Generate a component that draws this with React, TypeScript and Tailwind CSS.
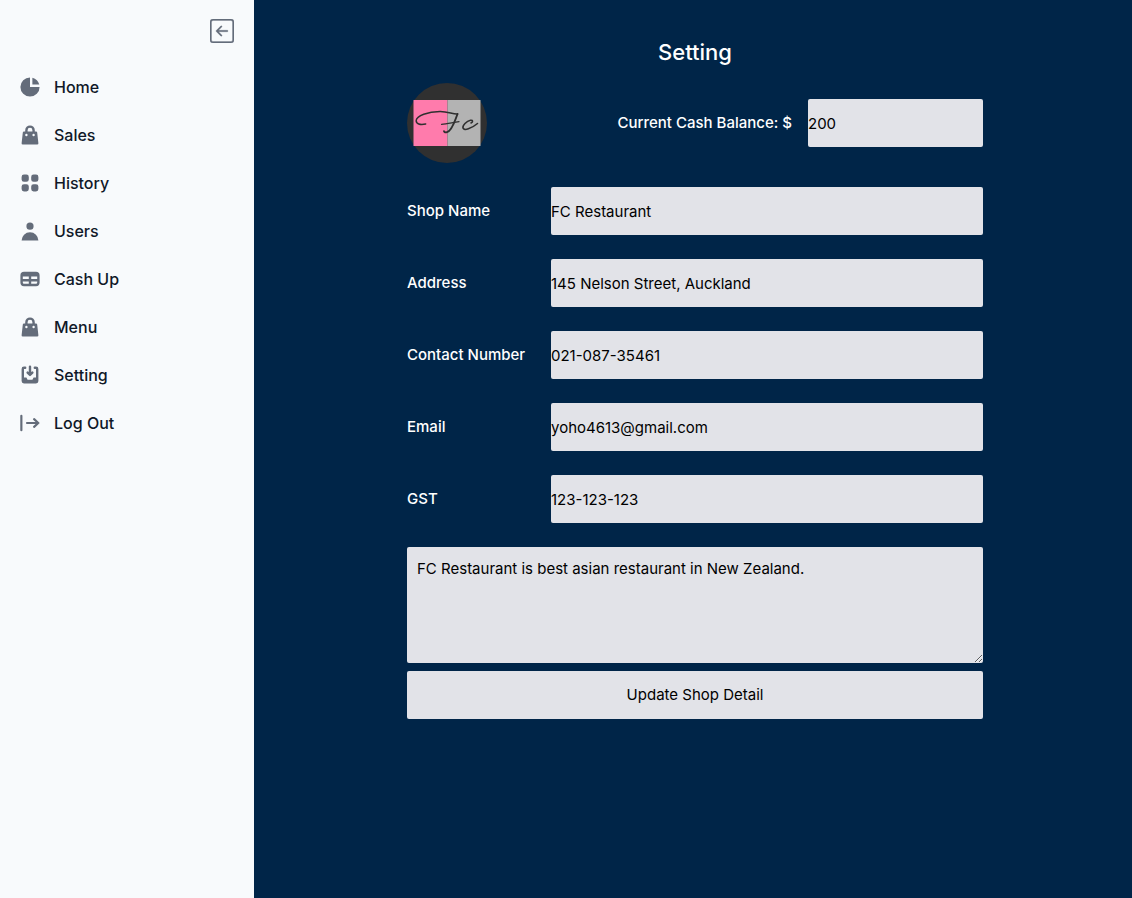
import { useState, type ReactNode } from "react";
import { BsArrowLeftSquare } from "react-icons/bs";

type NavItem = { label: string; icon: ReactNode };

const bag = (
  <path
    fillRule="evenodd"
    clipRule="evenodd"
    d="M10 2a4 4 0 00-4 4v1H5a1 1 0 00-.994.89l-1 9A1 1 0 004 18h12a1 1 0 00.994-1.11l-1-9A1 1 0 0015 7h-1V6a4 4 0 00-4-4zm2 5V6a2 2 0 10-4 0v1h4zm-6 3a1 1 0 112 0 1 1 0 01-2 0zm7-1a1 1 0 100 2 1 1 0 000-2z"
  />
);

const navItems: NavItem[] = [
  {
    label: "Home",
    icon: (
      <>
        <path d="M2 10a8 8 0 018-8v8h8a8 8 0 11-16 0z" />
        <path d="M12 2.252A8.014 8.014 0 0117.748 8H12V2.252z" />
      </>
    ),
  },
  { label: "Sales", icon: bag },
  {
    label: "History",
    icon: (
      <path d="M5 3a2 2 0 00-2 2v2a2 2 0 002 2h2a2 2 0 002-2V5a2 2 0 00-2-2H5zM5 11a2 2 0 00-2 2v2a2 2 0 002 2h2a2 2 0 002-2v-2a2 2 0 00-2-2H5zM11 5a2 2 0 012-2h2a2 2 0 012 2v2a2 2 0 01-2 2h-2a2 2 0 01-2-2V5zM11 13a2 2 0 012-2h2a2 2 0 012 2v2a2 2 0 01-2 2h-2a2 2 0 01-2-2v-2z" />
    ),
  },
  {
    label: "Users",
    icon: (
      <path fillRule="evenodd" clipRule="evenodd" d="M10 9a3 3 0 100-6 3 3 0 000 6zm-7 9a7 7 0 1114 0H3z" />
    ),
  },
  {
    label: "Cash Up",
    icon: (
      <path
        fillRule="evenodd"
        clipRule="evenodd"
        d="M5 4a3 3 0 00-3 3v6a3 3 0 003 3h10a3 3 0 003-3V7a3 3 0 00-3-3H5zm-1 9v-1h5v2H5a1 1 0 01-1-1zm7 1h4a1 1 0 001-1v-1h-5v2zm0-4h5V8h-5v2zM9 8H4v2h5V8z"
      />
    ),
  },
  { label: "Menu", icon: bag },
  {
    label: "Setting",
    icon: (
      <>
        <path d="M8.707 7.293a1 1 0 00-1.414 1.414l2 2a1 1 0 001.414 0l2-2a1 1 0 00-1.414-1.414L11 7.586V3a1 1 0 10-2 0v4.586l-.293-.293z" />
        <path d="M3 5a2 2 0 012-2h1a1 1 0 010 2H5v7h2l1 2h4l1-2h2V5h-1a1 1 0 110-2h1a2 2 0 012 2v10a2 2 0 01-2 2H5a2 2 0 01-2-2V5z" />
      </>
    ),
  },
  {
    label: "Log Out",
    icon: (
      <path
        d="M2.800 4v12M7.500 10h9.500M13.400 6.800L16.900 10l-3.500 3.200"
        fill="none"
        stroke="currentColor"
        strokeWidth="1.800"
        strokeLinecap="round"
        strokeLinejoin="round"
      />
    ),
  },
];

const fields = [
  { id: "shop-name", label: "Shop Name", type: "text", value: "FC Restaurant" },
  { id: "address", label: "Address", type: "text", value: "145 Nelson Street, Auckland" },
  { id: "contact", label: "Contact Number", type: "tel", value: "021-087-35461" },
  { id: "email", label: "Email", type: "email", value: "yoho4613@gmail.com" },
  { id: "gst", label: "GST", type: "text", value: "123-123-123" },
];

function Sidebar() {
  return (
    <aside className="w-[254px] shrink-0 bg-[#f8fafc] px-2">
      <div className="flex justify-end px-3 pt-[19px]">
        <button type="button" aria-label="Collapse sidebar" className="text-[#646c7a]">
          <BsArrowLeftSquare className="size-6" strokeWidth="0.2" />
        </button>
      </div>
      <nav className="pt-6">
        <ul className="space-y-2">
          {navItems.map((item) => (
            <li key={item.label}>
              <a href="#" className="flex items-center gap-3 rounded-lg px-[10px] py-2 font-medium text-gray-900">
                <svg viewBox="0 0 20 20" fill="currentColor" className="size-6 text-[#646c7a]" aria-hidden="true">
                  {item.icon}
                </svg>
                {item.label}
              </a>
            </li>
          ))}
        </ul>
      </nav>
    </aside>
  );
}

function ShopLogo() {
  return (
    <svg viewBox="0 0 80 80" className="size-20" role="img" aria-label="Shop logo">
      <circle cx="40" cy="40" r="40" fill="#303030" />
      <rect x="6.500" y="17" width="34" height="46" fill="#ff7bac" />
      <rect x="40.500" y="17" width="33" height="46" fill="#b3b3b3" />
      <g fill="none" stroke="#303030" strokeLinecap="round" strokeLinejoin="round">
        <path
          strokeWidth="1.500"
          d="M18.700 41C13 42.300 9 40.800 9.200 37.500C9.600 32.500 21 28.700 33 28.500C41 28.400 46 31.500 50.500 31"
        />
        <path strokeWidth="1.900" d="M50.500 31C48 37 45.500 47.500 40 49.200C38.500 49.700 37.300 49.200 37 48.200" />
        <path strokeWidth="1.200" d="M34.500 41.300C40 40.800 46 39.500 52 38.700" />
        <path
          strokeWidth="1.600"
          d="M64 40C66.300 38.800 66 37 63.500 37.300C59.500 38 55.300 42.500 56 45C57 48.300 64.500 45.500 70.500 40.500"
        />
      </g>
    </svg>
  );
}

const control = "h-12 min-w-0 rounded-xs bg-[#e2e3e8] text-black";

export default function App() {
  const [values, setValues] = useState<Record<string, string>>(
    Object.fromEntries(fields.map((f) => [f.id, f.value])),
  );

  return (
    <div className="flex min-h-screen font-[Inter,sans-serif] text-base">
      <Sidebar />
      <main className="flex-1 bg-[#002548] pr-4 pl-5 text-white">
        <form className="mx-auto max-w-xl pt-9 text-[15px] leading-6" onSubmit={(e) => e.preventDefault()}>
          <h1 className="text-center text-[22px] leading-8 font-medium">Setting</h1>
          <div className="mt-[15px] flex items-center justify-between">
            <ShopLogo />
            <div className="flex items-center gap-4">
              <label htmlFor="balance" className="font-medium">
                Current Cash Balance: $
              </label>
              <input id="balance" defaultValue="200" className={`${control} w-[175px]`} />
            </div>
          </div>
          <div className="mt-6 space-y-6">
            {fields.map((f) => (
              <div key={f.id} className="grid grid-cols-4 items-center">
                <label htmlFor={f.id} className="font-medium">
                  {f.label}
                </label>
                <input
                  id={f.id}
                  type={f.type}
                  value={values[f.id]}
                  onChange={(e) => setValues({ ...values, [f.id]: e.target.value })}
                  className={`${control} col-span-3`}
                />
              </div>
            ))}
            <textarea
              aria-label="Description"
              defaultValue="FC Restaurant is best asian restaurant in New Zealand."
              className="block h-[116px] w-full rounded-xs bg-[#e2e3e8] px-[10px] py-[10px] text-black"
            />
          </div>
          <button type="submit" className={`${control} mt-2 w-full`}>
            Update Shop Detail
          </button>
        </form>
      </main>
    </div>
  );
}
